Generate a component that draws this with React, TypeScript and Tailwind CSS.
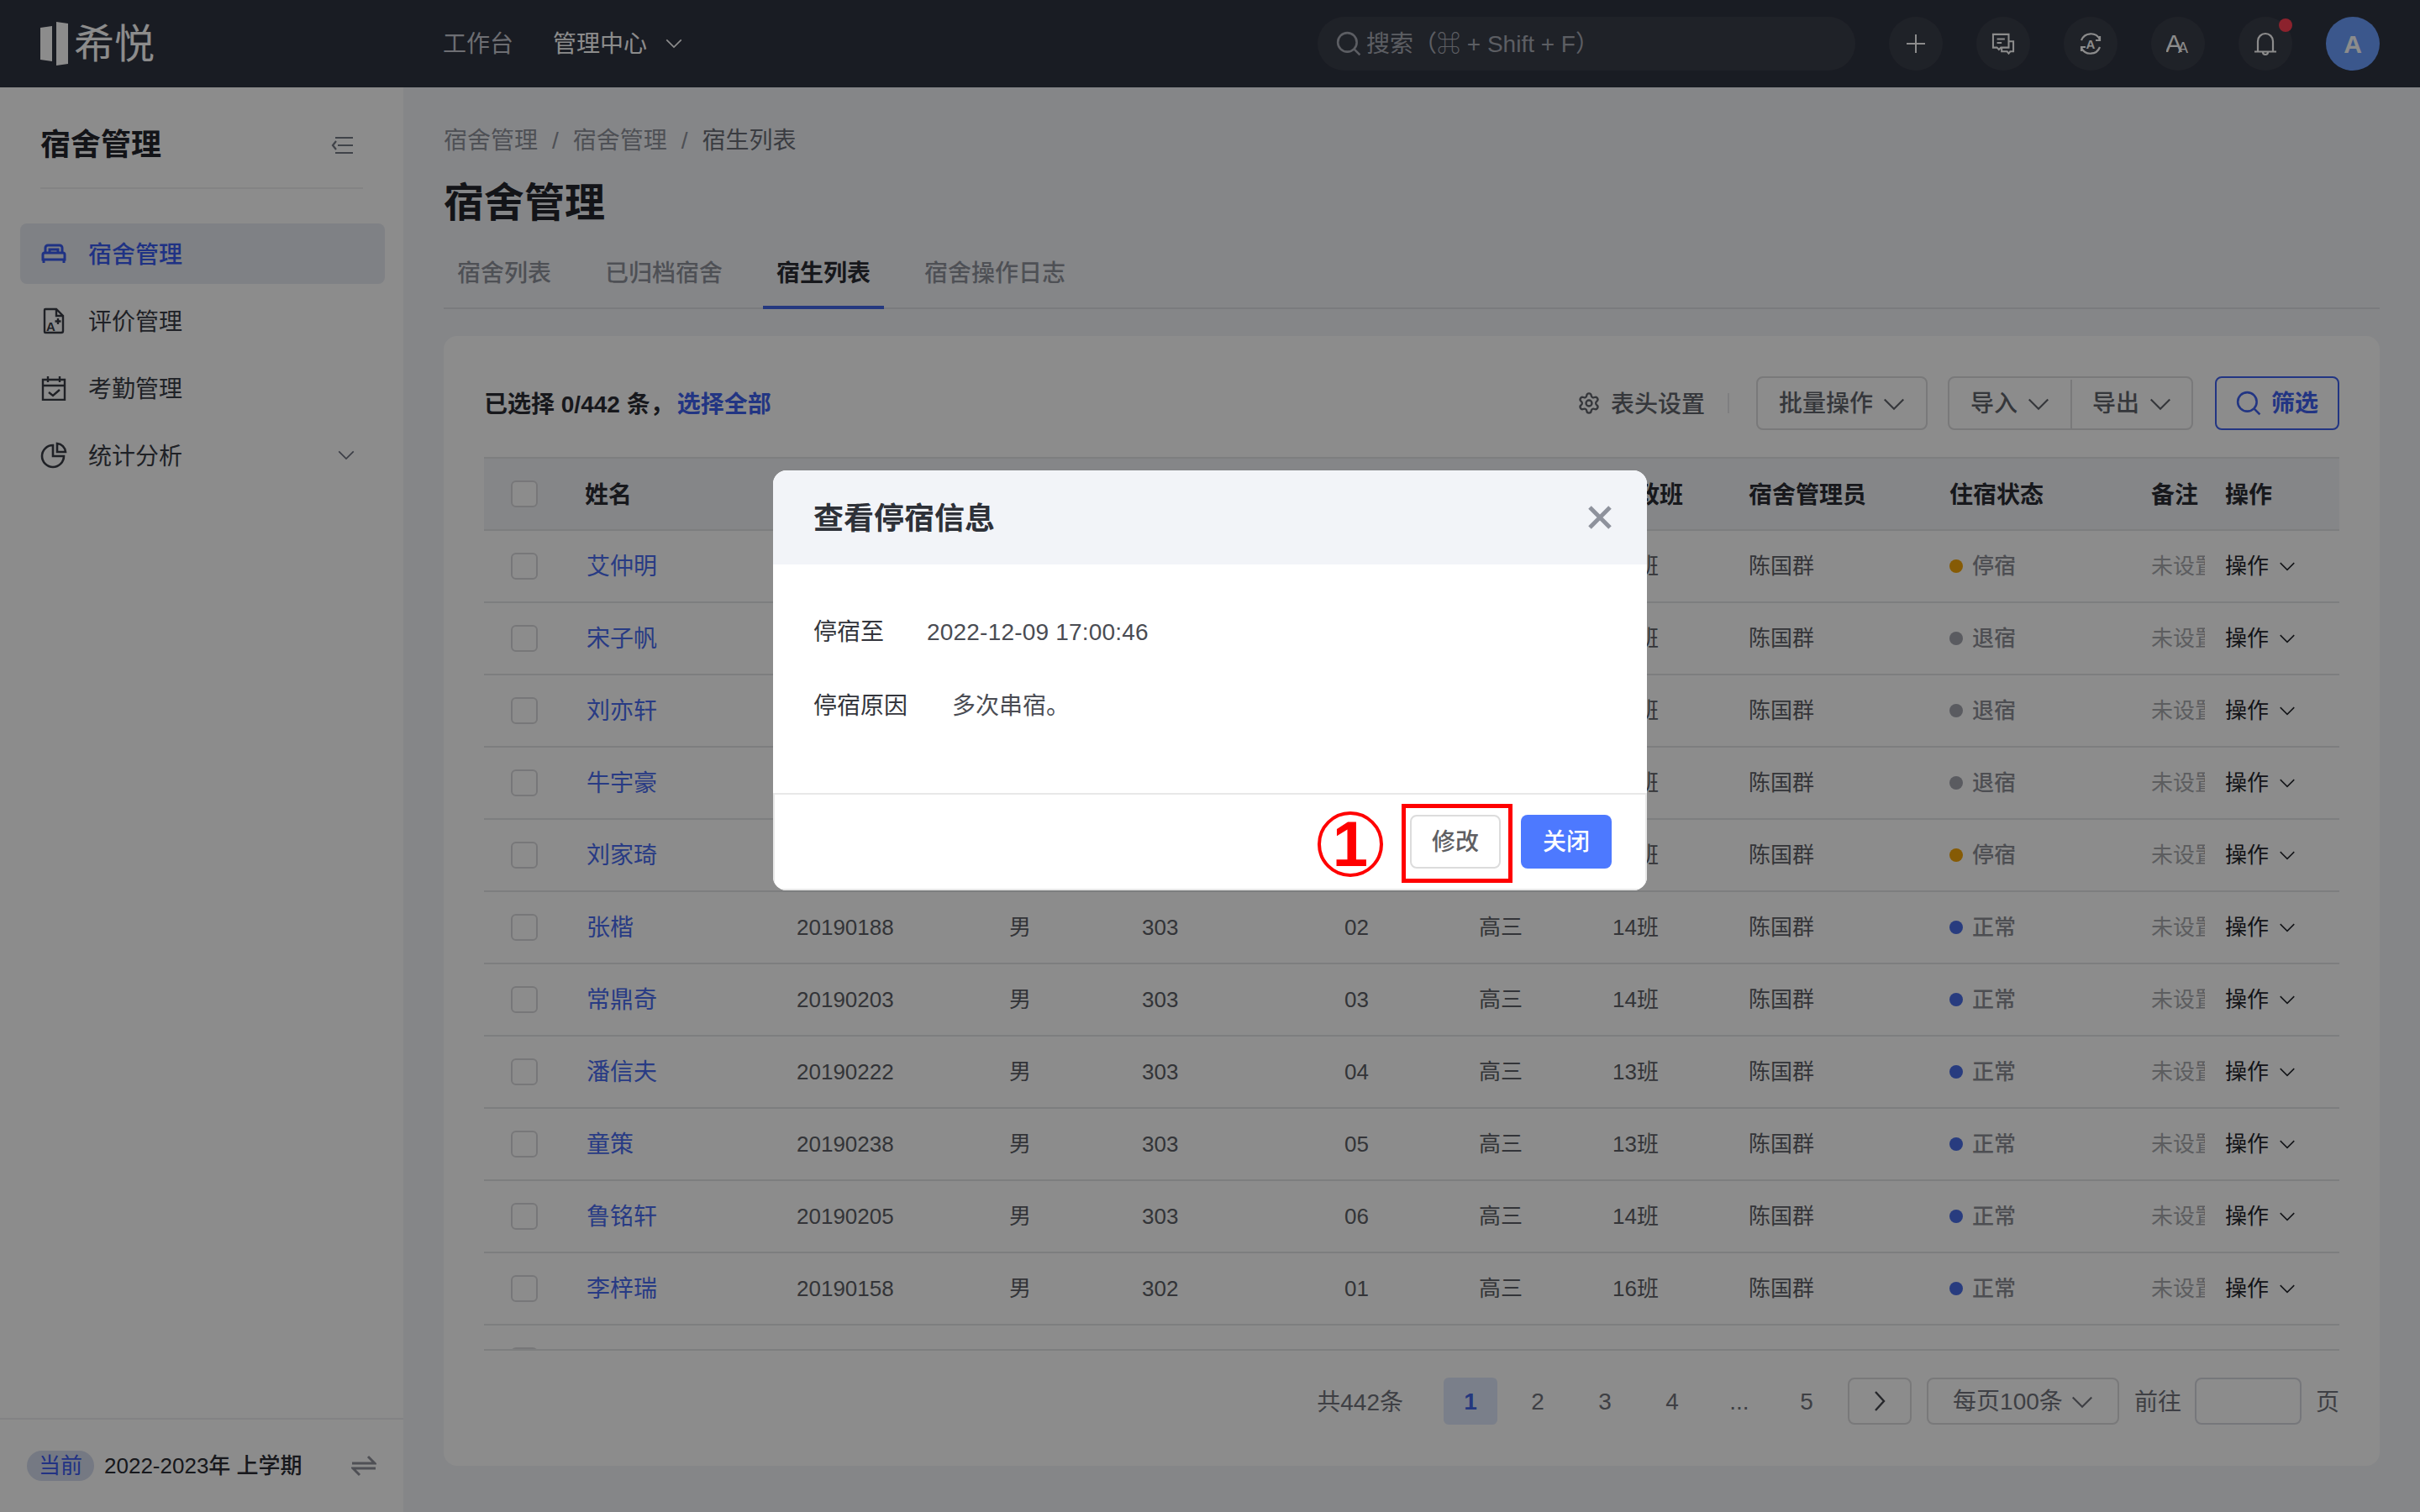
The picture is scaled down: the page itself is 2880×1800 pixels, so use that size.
import React from "react";
import { Settings } from "lucide-react";

type Row = [string, string, string, string, string, string, string, "停宿" | "退宿" | "正常"];

const rows: Row[] = [
  ["艾仲明", "20190176", "男", "304", "01", "高三", "14班", "停宿"],
  ["宋子帆", "20190183", "男", "304", "02", "高三", "14班", "退宿"],
  ["刘亦轩", "20190191", "男", "304", "03", "高三", "13班", "退宿"],
  ["牛宇豪", "20190207", "男", "304", "04", "高三", "13班", "退宿"],
  ["刘家琦", "20190164", "男", "303", "01", "高三", "16班", "停宿"],
  ["张楷", "20190188", "男", "303", "02", "高三", "14班", "正常"],
  ["常鼎奇", "20190203", "男", "303", "03", "高三", "14班", "正常"],
  ["潘信夫", "20190222", "男", "303", "04", "高三", "13班", "正常"],
  ["童策", "20190238", "男", "303", "05", "高三", "13班", "正常"],
  ["鲁铭轩", "20190205", "男", "303", "06", "高三", "14班", "正常"],
  ["李梓瑞", "20190158", "男", "302", "01", "高三", "16班", "正常"],
];

const headers = ["姓名", "学号", "性别", "宿舍", "床位", "年级", "行政班", "宿舍管理员", "住宿状态", "备注", "操作"];

const cols =
  "grid grid-cols-[120px_252px_253px_158px_241px_160px_159px_162px_239px_240px_88px_136px] items-center";

function Chevron({ className }: { className: string }) {
  return (
    <svg viewBox="0 0 24 14" fill="none" stroke="currentColor" strokeWidth="2" className={className}>
      <path d="M1.500 1.500L12 12 22.500 1.500" />
    </svg>
  );
}

function Check() {
  return <span className="block h-[32px] w-[32px] rounded-[6px] border-2 border-[#d9d9dc] bg-white" />;
}

function SearchIcon({ className }: { className: string }) {
  return (
    <svg viewBox="0 0 28 28" fill="none" stroke="currentColor" strokeWidth="2.4" className={className}>
      <circle cx="12.5" cy="12.5" r="10.5" />
      <path d="M20 20l6.5 6.5" />
    </svg>
  );
}

function TopIcon({ children, badge }: { children: React.ReactNode; badge?: boolean }) {
  return (
    <div className="relative flex h-[64px] w-[64px] items-center justify-center rounded-full bg-[#3a3e49] text-white">
      {children}
      {badge && <span className="absolute right-0 top-[2px] h-[16px] w-[16px] rounded-full bg-[#ff3f52]" />}
    </div>
  );
}

function SideItem({
  label,
  active,
  icon,
  arrow,
}: {
  label: string;
  active?: boolean;
  icon: React.ReactNode;
  arrow?: boolean;
}) {
  return (
    <div
      className={`flex h-[72px] items-center rounded-[8px] pl-[24px] pr-[36px] text-[28px] leading-[40px] ${
        active ? "bg-[#e8ebf2] font-medium text-[#3a5cf0]" : "text-[#3a3d46]"
      }`}
    >
      <span className="flex h-[32px] w-[32px] items-center justify-center">{icon}</span>
      <span className="ml-[25px] pt-[3px]">{label}</span>
      {arrow && <Chevron className="ml-auto h-[12px] w-[20px] text-[#6e7280]" />}
    </div>
  );
}

export default function App() {
  return (
    <div className="relative flex h-[1800px] w-[2880px] flex-col overflow-hidden bg-[#f2f4f8] font-['Liberation_Sans','Noto_Sans_CJK_SC','DejaVu_Sans',sans-serif] text-[28px]">
      {/* top bar */}
      <header className="flex h-[104px] shrink-0 items-center bg-[#2f3340] px-[48px] text-white">
        <div className="flex w-[137px] items-center">
          <svg viewBox="0 0 34 52" className="h-[52px] w-[34px] fill-white">
            <polygon points="0,7 14,5 14,47 0,45" />
            <polygon points="19,0 33,2 33,50 19,52" />
          </svg>
          <span className="ml-[6px] whitespace-nowrap pt-[2px] text-[48px] font-normal leading-[56px]">希悦</span>
        </div>
        <span className="ml-[342px] w-[84px] pt-[2px] leading-[40px] text-[#c6c9d2]">工作台</span>
        <span className="ml-[47px] pt-[2px] leading-[40px]">管理中心</span>
        <Chevron className="ml-[22px] h-[12px] w-[20px]" />
        <div className="ml-auto flex items-center gap-[40px]">
          <div className="flex h-[64px] w-[640px] items-center rounded-full bg-[#3a3e49] pl-[22px] text-[#a8abb5]">
            <SearchIcon className="h-[30px] w-[30px]" />
            <span className="ml-[6px] whitespace-nowrap pt-[2px] leading-[40px]">搜索（⌘ + Shift + F）</span>
          </div>
          <div className="flex items-center gap-[40px]">
            <TopIcon>
              <svg viewBox="0 0 24 24" stroke="currentColor" strokeWidth="2" className="h-[24px] w-[24px]">
                <path d="M12 1v22M1 12h22" />
              </svg>
            </TopIcon>
            <TopIcon>
              <svg viewBox="0 0 30 28" fill="none" stroke="currentColor" strokeWidth="2.2" className="h-[26px] w-[28px]">
                <path d="M2 2h20v17H12l-2.5 2.5L7 19H2zM7 8h10M7 13h6" />
                <path d="M22 11h6v13h-4l-2 2.5L20 24h-7v-5" />
              </svg>
            </TopIcon>
            <TopIcon>
              <svg viewBox="0 0 28 28" fill="none" stroke="currentColor" strokeWidth="2.2" className="h-[28px] w-[28px]">
                <path d="M3 10A12 12 0 0 1 25 9M25 18A12 12 0 0 1 3 19" />
                <path d="M25 5v5h-5M3 23v-5h5" />
                <text x="14" y="20" textAnchor="middle" fontSize="15" fontWeight="700" fill="currentColor" stroke="none" fontFamily="Liberation Sans">A</text>
              </svg>
            </TopIcon>
            <TopIcon>
              <svg viewBox="0 0 28 28" className="h-[28px] w-[28px]" fill="currentColor">
                <text x="-1" y="24" fontSize="30" fontWeight="400" fontFamily="Liberation Sans">A</text>
                <text x="14" y="25" fontSize="18" fontWeight="400" fontFamily="Liberation Sans">A</text>
              </svg>
            </TopIcon>
            <TopIcon badge>
              <svg viewBox="0 0 28 30" fill="none" stroke="currentColor" strokeWidth="2.2" className="h-[30px] w-[28px]">
                <path d="M5 24V12a9 9 0 0 1 18 0v12M1 24.500h26" />
                <path d="M11 25a3 3 0 0 0 6 0" />
              </svg>
            </TopIcon>
            <div className="flex h-[64px] w-[64px] items-center justify-center rounded-full bg-[#6c9fff] text-[30px] font-bold text-white">
              A
            </div>
          </div>
        </div>
      </header>

      <div className="flex min-h-0 flex-1">
        {/* sidebar */}
        <aside className="flex w-[480px] shrink-0 flex-col bg-white">
          <div className="mx-[48px] flex h-[121px] items-center justify-between border-b-2 border-[#eeeef0] pr-[12px] pt-[19px]">
            <span className="text-[36px] font-bold leading-[48px] text-[#23252c]">宿舍管理</span>
            <svg viewBox="0 0 26 22" fill="none" stroke="#767a85" strokeWidth="2.2" className="h-[22px] w-[26px]">
              <path d="M5 2h21M8 11h18M5 20h21M6 6l-4 5 4 5" />
            </svg>
          </div>
          <nav className="ml-[24px] mr-[22px] mt-[41px] flex flex-col gap-[8px]">
            <SideItem
              active
              label="宿舍管理"
              icon={
                <svg viewBox="0 0 32 24" fill="none" stroke="currentColor" strokeWidth="3" className="h-[24px] w-[32px]">
                  <path d="M6 11V5a3 3 0 0 1 3-3h14a3 3 0 0 1 3 3v6M11 11V7h10v4" />
                  <path d="M3 19v-6a2 2 0 0 1 2-2h22a2 2 0 0 1 2 2v6zM4 19v4M28 19v4" />
                </svg>
              }
            />
            <SideItem
              label="评价管理"
              icon={
                <svg viewBox="0 0 26 32" fill="none" stroke="#3a3d46" strokeWidth="2.4" className="h-[32px] w-[26px]">
                  <path d="M3 2h13l8 8v18a2 2 0 0 1-2 2H3a1 1 0 0 1-1-1V3a1 1 0 0 1 1-1zM16 2v8h8" />
                  <path d="M18 13v7M14.500 16.500h7" />
                  <text x="4" y="28" fontSize="15" fontWeight="700" fill="#3a3d46" stroke="none" fontFamily="Liberation Sans">A</text>
                </svg>
              }
            />
            <SideItem
              label="考勤管理"
              icon={
                <svg viewBox="0 0 30 30" fill="none" stroke="#3a3d46" strokeWidth="2.4" className="h-[30px] w-[30px]">
                  <path d="M2 5h26v24H2zM2 12h26M8 1v7M22 1v7M9 20l5 4 8-7" />
                </svg>
              }
            />
            <SideItem
              arrow
              label="统计分析"
              icon={
                <svg viewBox="0 0 32 32" fill="none" stroke="#3a3d46" strokeWidth="2.6" className="h-[32px] w-[32px]">
                  <path d="M15 4a13 13 0 1 0 13 13H15z" />
                  <path d="M20 2a11 11 0 0 1 10 10H20z" />
                </svg>
              }
            />
          </nav>
          <div className="mt-auto flex h-[112px] items-center border-t-2 border-[#eeeef0] px-[32px] text-[26px]">
            <span className="flex h-[36px] w-[80px] items-center justify-center rounded-full bg-[#d5dcee] leading-[36px] text-[#3d5cf0]">
              当前
            </span>
            <span className="ml-[12px] whitespace-nowrap font-medium leading-[36px] text-[#2a2c33]">2022-2023年 上学期</span>
            <svg viewBox="0 0 30 26" fill="none" stroke="#90939c" strokeWidth="3" className="ml-auto h-[26px] w-[30px]">
              <path d="M1 10h27L20 2M29 16H2l8 8" />
            </svg>
          </div>
        </aside>

        {/* main */}
        <main className="flex min-w-0 flex-1 flex-col px-[48px] pt-[42px]">
          <div className="flex h-[40px] items-center pt-[3px] leading-[40px] text-[#8f929b]">
            <span>宿舍管理</span>
            <span className="mx-[17px]">/</span>
            <span>宿舍管理</span>
            <span className="mx-[17px]">/</span>
            <span className="text-[#6b6e77]">宿生列表</span>
          </div>
          <h1 className="mt-[24px] text-[48px] font-bold leading-[64px] text-[#23252c]">宿舍管理</h1>
          <div className="mt-[6px] flex h-[88px] gap-[32px] border-b-2 border-[#dfe1e6] text-[28px] font-medium leading-[91px] text-[#8f929b]">
            <span className="h-[88px] px-[16px]">宿舍列表</span>
            <span className="h-[88px] px-[16px]">已归档宿舍</span>
            <span className="h-[88px] border-b-4 border-[#4367e8] px-[16px] font-bold text-[#2a2c33]">宿生列表</span>
            <span className="h-[88px] px-[16px]">宿舍操作日志</span>
          </div>

          <section className="mt-[32px] flex h-[1345px] flex-col rounded-[16px] bg-white px-[48px] pt-[48px]">
            {/* toolbar */}
            <div className="flex h-[64px] items-center">
              <span className="pt-[3px] font-bold leading-[40px] text-[#2a2c33]">已选择 0/442 条，</span>
              <span className="ml-[4px] pt-[3px] font-bold leading-[40px] text-[#3f62ee]">选择全部</span>
              <div className="ml-auto flex items-center font-medium leading-[40px] text-[#62646c]">
                <Settings size={28} strokeWidth={2} />
                <span className="ml-[12px] pt-[3px]">表头设置</span>
                <span className="ml-[27px] h-[24px] w-[2px] bg-[#e8e8ea]" />
                <button className="ml-[32px] flex h-[64px] w-[204px] items-center justify-center gap-[12px] rounded-[8px] border-2 border-[#dcdcde] pt-[2px]">
                  批量操作
                  <Chevron className="h-[15px] w-[26px]" />
                </button>
                <div className="ml-[24px] flex h-[64px] w-[292px] rounded-[8px] border-2 border-[#dcdcde] pt-[2px]">
                  <span className="flex w-[146px] items-center justify-center gap-[12px] border-r-2 border-[#dcdcde]">
                    导入
                    <Chevron className="h-[15px] w-[26px]" />
                  </span>
                  <span className="flex flex-1 items-center justify-center gap-[12px]">
                    导出
                    <Chevron className="h-[15px] w-[26px]" />
                  </span>
                </div>
                <button className="ml-[26px] flex h-[64px] w-[148px] items-center justify-center gap-[12px] rounded-[8px] border-2 border-[#3f62ee] font-bold text-[#3f62ee]">
                  <SearchIcon className="h-[30px] w-[30px]" />
                  <span className="pt-[2px]">筛选</span>
                </button>
              </div>
            </div>

            {/* table */}
            <div className="mt-[32px] h-[1064px] overflow-hidden border-y-2 border-[#e4e5e8] text-[26px] text-[#5d5f66]">
              <div className={`${cols} h-[86px] border-b-2 border-[#e4e5e8] bg-[#f2f4f8] text-[28px] font-bold leading-[40px] text-[#2a2c33]`}>
                <span className="pl-[32px]">
                  <Check />
                </span>
                {headers.map((h) => (
                  <span key={h} className="pt-[3px]">
                    {h}
                  </span>
                ))}
              </div>
              {rows.map((r) => (
                <div key={r[0]} className={`${cols} h-[86px] border-b-2 border-[#e4e5e8] leading-[36px]`}>
                  <span className="pl-[32px]">
                    <Check />
                  </span>
                  <span className="pl-[2px] pt-[2px] text-[28px] text-[#4a6cf0]">{r[0]}</span>
                  <span>{r[1]}</span>
                  <span>{r[2]}</span>
                  <span>{r[3]}</span>
                  <span>{r[4]}</span>
                  <span>{r[5]}</span>
                  <span>{r[6]}</span>
                  <span>陈国群</span>
                  <span className="flex items-center font-medium text-[#8c8e96]">
                    <span
                      className={`h-[16px] w-[16px] rounded-full ${
                        r[7] === "停宿" ? "bg-[#f5a60a]" : r[7] === "退宿" ? "bg-[#a4a6b0]" : "bg-[#4a6ee8]"
                      }`}
                    />
                    <span className="ml-[11px]">{r[7]}</span>
                  </span>
                  <span className="w-[64px] overflow-hidden whitespace-nowrap text-[#a8a9ad]">未设置</span>
                  <span className="flex items-center text-[#24262c]">
                    操作
                    <Chevron className="ml-[12px] h-[11px] w-[20px]" />
                  </span>
                </div>
              ))}
              <div className="pl-[32px] pt-[26px]">
                <Check />
              </div>
            </div>

            {/* pagination */}
            <div className="mt-[32px] flex h-[56px] items-center justify-end leading-[40px] text-[#72747c]">
              <span className="pt-[3px]">共442条</span>
              <div className="ml-[48px] flex gap-[16px]">
                {["1", "2", "3", "4", "...", "5"].map((p, i) => (
                  <span
                    key={p}
                    className={`flex h-[56px] w-[64px] items-center justify-center rounded-[6px] pt-[2px] ${
                      i === 0 ? "bg-[#dfe7fb] font-bold text-[#4367e8]" : ""
                    }`}
                  >
                    {p}
                  </span>
                ))}
              </div>
              <span className="ml-[17px] flex h-[56px] w-[76px] items-center justify-center rounded-[8px] border-2 border-[#dcdcde]">
                <svg viewBox="0 0 14 24" fill="none" stroke="currentColor" strokeWidth="2.4" className="h-[24px] w-[14px] text-[#45474e]">
                  <path d="M2 1l10 11L2 23" />
                </svg>
              </span>
              <span className="ml-[18px] flex h-[56px] w-[229px] items-center justify-center gap-[10px] rounded-[8px] border-2 border-[#dcdcde] pt-[2px]">
                每页100条
                <Chevron className="h-[15px] w-[26px]" />
              </span>
              <span className="ml-[18px] pt-[3px]">前往</span>
              <span className="ml-[16px] h-[56px] w-[127px] rounded-[8px] border-2 border-[#d8d9e0]" />
              <span className="ml-[17px] pt-[3px]">页</span>
            </div>
          </section>
        </main>
      </div>

      {/* dim layer */}
      <div className="absolute inset-0 bg-black/45" />

      {/* dialog */}
      <div className="absolute left-[920px] top-[560px] flex h-[500px] w-[1040px] flex-col overflow-hidden rounded-[16px] bg-white">
        <div className="flex h-[112px] shrink-0 items-center justify-between bg-[#f2f4f8] pl-[48px] pr-[42px]">
          <span className="pt-[3px] text-[36px] font-bold leading-[48px] text-[#2e3138]">查看停宿信息</span>
          <svg viewBox="0 0 28 28" fill="none" stroke="#8e929c" strokeWidth="5" className="h-[28px] w-[28px]">
            <path d="M2 2l24 24M26 2L2 26" />
          </svg>
        </div>
        <div className="flex h-[272px] shrink-0 flex-col pl-[48px] pt-[61px] leading-[40px]">
          <div className="flex text-[#4a4c53]">
            <span className="text-[#33353c]">停宿至</span>
            <span className="ml-[51px] tracking-[0.2px]">2022-12-09 17:00:46</span>
          </div>
          <div className="mt-[48px] flex text-[#4a4c53]">
            <span className="text-[#33353c]">停宿原因</span>
            <span className="ml-[53px]">多次串宿。</span>
          </div>
        </div>
        <div className="flex flex-1 items-start justify-end border-x-2 border-y-2 border-[#e8e8e8] pr-[40px] pt-[24px]">
          <div className="-mt-[4px] flex h-[78px] w-[78px] items-center justify-center rounded-full border-4 border-[#ff0000] text-[76px] font-bold leading-[78px] text-[#ff0000]">
            1
          </div>
          <div className="-mt-[13px] ml-[22px] h-[94px] w-[132px] border-[5px] border-[#ff0000] pl-[5px] pt-[8px]">
            <button className="flex h-[64px] w-[108px] items-center justify-center rounded-[8px] border-2 border-[#dcdcdc] bg-white pt-[2px] font-medium text-[#5f5f63]">
              修改
            </button>
          </div>
          <button className="ml-[10px] flex h-[64px] w-[108px] items-center justify-center rounded-[8px] bg-[#4d79ff] pt-[2px] font-medium text-white">
            关闭
          </button>
        </div>
      </div>
    </div>
  );
}
